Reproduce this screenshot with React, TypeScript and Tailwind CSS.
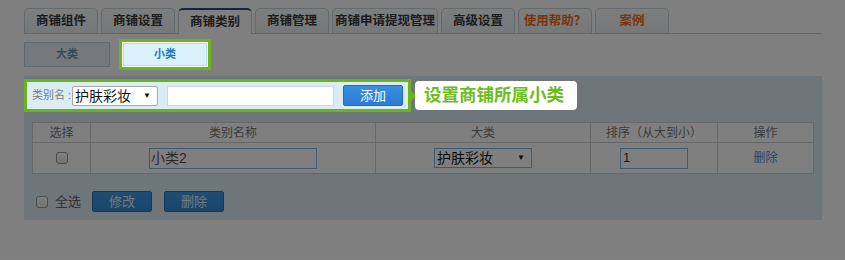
import React from "react";

interface Tab {
  label: string;
  wide?: boolean;
  active?: boolean;
  warn?: boolean;
}

const tabs: Tab[] = [
  { label: "商铺组件" },
  { label: "商铺设置" },
  { label: "商铺类别", active: true },
  { label: "商铺管理" },
  { label: "商铺申请提现管理", wide: true },
  { label: "高级设置" },
  { label: "使用帮助？", warn: true },
  { label: "案例", warn: true },
];

const font = { fontFamily: '"Liberation Sans", "Noto Sans CJK SC", sans-serif' };

// small fake checkbox so it renders the same everywhere
const Check = () => (
  <div className="w-[12px] h-[12px] rounded-[3px] border border-[#9a9a9a] bg-gradient-to-b from-white to-[#e6e6e6]" />
);

const FakeSelect = ({ width, text }: { width: string; text: string }) => (
  <div className={`${width} h-[20px] bg-white border flex items-center justify-between pl-[2px] pr-[6px]`}>
    <span className="text-[14px] leading-none text-[#111]">{text}</span>
    <span className="text-[8px] leading-none text-[#111]">▼</span>
  </div>
);

export default function App() {
  return (
    <div className="relative w-[845px] h-[260px] bg-white overflow-hidden" style={font}>
      <div className="pt-[8px] pl-[24px] w-[822px]">
        {/* Tabs */}
        <div className="flex gap-[3px] border-b border-[#c2cad2] h-[26px]">
          {tabs.map((t) => (
            <div
              key={t.label}
              className={`${t.wide ? "w-[106px]" : "w-[74px]"} h-[25px] rounded-t-[5px] border-x flex items-center justify-center text-[12.5px] font-bold whitespace-nowrap ${
                t.active
                  ? "bg-white border-t-2 border-t-[#2c4a7c] border-x-[#c8d2da] h-[26px]"
                  : "bg-gradient-to-b from-[#fbfcfd] to-[#eceff2] border-t border-[#c8d2da]"
              } ${t.warn ? "text-[#f26a10]" : "text-[#3a3a3a]"}`}
            >
              {t.label}
            </div>
          ))}
        </div>

        {/* Sub tabs */}
        <div className="mt-[5px] flex items-center gap-[9px] h-[31px]">
          <div className="w-[86px] h-[25px] border border-[#bcd3e2] bg-[#eaf2f7] flex items-center justify-center text-[11px] font-bold text-[#6d93b6]">
            大类
          </div>
          <div className="relative z-20 border-[3px] border-[#6cb41c] bg-white p-px">
            <div className="w-[84px] h-[23px] border border-[#b8dced] bg-[#dbf1f9] flex items-center justify-center text-[11px] font-bold text-[#1f7ab8]">
              小类
            </div>
          </div>
        </div>

        {/* Panel */}
        <div className="mt-[6px] bg-[#dcedf2] pt-[3px] pb-[9px] h-[144px]">
          <div className="flex items-center">
            <div className="relative z-20 w-[387px] h-[33px] border-[3px] border-[#6cb41c] bg-[#dbedf4] flex items-center pl-[5px]">
              <span className="w-[40px] text-[11px] text-[#7a7a7a] whitespace-nowrap">类别名 :</span>
              <FakeSelect width="w-[86px] border-[#a9a9a9] rounded-[2px]" text="护肤彩妆" />
              <div className="ml-[9px] w-[167px] h-[20px] bg-white border border-[#d4d4d4]" />
              <div className="ml-[9px] w-[60px] h-[21px] rounded-[2px] border border-[#1f6dc4] bg-gradient-to-b from-[#3b8ee0] to-[#2a7bd6] flex items-center justify-center text-[13px] text-white">
                添加
              </div>
            </div>
            <div className="relative z-20 w-0 h-0 border-y-[5px] border-y-transparent border-l-[5px] border-l-[#6cb41c]" />
            <div className="relative z-20 -ml-px w-[162px] h-[29px] rounded-[4px] bg-white flex items-center pl-[9px] text-[17.5px] font-bold text-[#6cbd1e]">
              设置商铺所属小类
            </div>
          </div>

          {/* Table */}
          <div className="mt-[10px] mx-[8px] bg-white border border-[#d0d0d0] text-[12px] text-[#777]">
            <div className="flex h-[20px] border-b border-[#d0d0d0]">
              <div className="w-[58px] border-r border-[#d0d0d0] flex items-center justify-center">选择</div>
              <div className="w-[285px] border-r border-[#d0d0d0] flex items-center justify-center">类别名称</div>
              <div className="w-[215px] border-r border-[#d0d0d0] flex items-center justify-center">大类</div>
              <div className="w-[127px] border-r border-[#d0d0d0] flex items-center justify-center">排序（从大到小）</div>
              <div className="flex-1 flex items-center justify-center">操作</div>
            </div>
            <div className="flex h-[30px]">
              <div className="w-[58px] border-r border-[#d0d0d0] flex items-center justify-center">
                <Check />
              </div>
              <div className="w-[285px] border-r border-[#d0d0d0] flex items-center justify-center">
                <div className="w-[168px] h-[21px] border border-[#7fb4d8] flex items-center pl-px text-[14px] text-[#555]">
                  小类2
                </div>
              </div>
              <div className="w-[215px] border-r border-[#d0d0d0] flex items-center justify-center">
                <FakeSelect width="w-[98px] border-[#7fb4d8]" text="护肤彩妆" />
              </div>
              <div className="w-[127px] border-r border-[#d0d0d0] flex items-center justify-center">
                <div className="w-[68px] h-[21px] border border-[#7fb4d8] flex items-center pl-[2px] text-[13px] text-[#333]">
                  1
                </div>
              </div>
              <div className="flex-1 flex items-center justify-center text-[#4a8ed0]">删除</div>
            </div>
          </div>

          {/* Footer actions */}
          <div className="mt-[17px] pl-[12px] flex items-center h-[21px]">
            <Check />
            <span className="ml-[7px] text-[13px] text-[#666]">全选</span>
            <div className="ml-[11px] w-[60px] h-[21px] rounded-[2px] border border-[#2c70b4] bg-gradient-to-b from-[#3f9ae6] to-[#348bd8] flex items-center justify-center text-[13px] text-[#e8f0f8]">
              修改
            </div>
            <div className="ml-[12px] w-[60px] h-[21px] rounded-[2px] border border-[#2c70b4] bg-gradient-to-b from-[#3f9ae6] to-[#348bd8] flex items-center justify-center text-[13px] text-[#e8f0f8]">
              删除
            </div>
          </div>
        </div>
      </div>

      {/* dim layer, highlighted bits sit above it */}
      <div className="absolute inset-0 z-10 bg-black/50" />
    </div>
  );
}
